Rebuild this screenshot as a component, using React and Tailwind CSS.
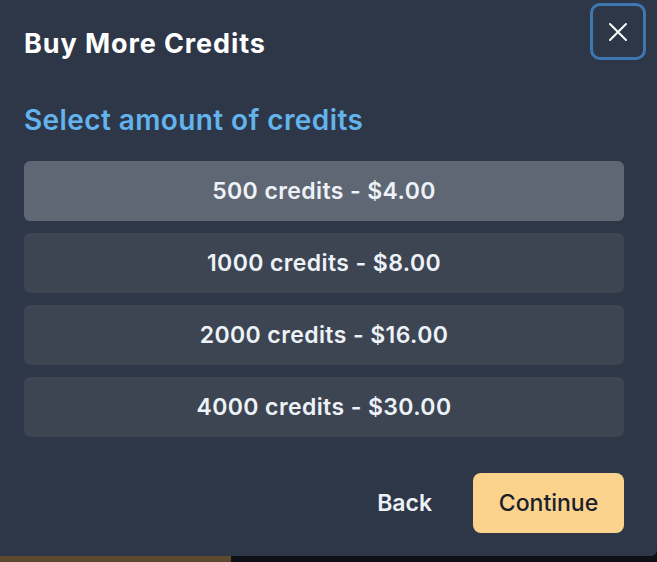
import React from "react";

const options = [
  { label: "500 credits - $4.00", selected: true },
  { label: "1000 credits - $8.00" },
  { label: "2000 credits - $16.00" },
  { label: "4000 credits - $30.00" },
];

export default function App() {
  return (
    <div
      className="w-[657px] h-[562px] bg-[#0f1117] flex flex-col overflow-hidden"
      style={{ fontFamily: "Inter, 'Noto Sans', sans-serif" }}
    >
      <div className="h-[556px] w-[657px] bg-[#2d3748] rounded-br-md flex flex-col">
        <div className="flex items-start justify-between">
          <h2 className="pl-6 pt-[27px] text-[27px] leading-[34px] font-bold text-white tracking-[0.9px]">
            Buy More Credits
          </h2>
          <button className="mt-[3px] mr-[11px] w-[56px] h-[57px] rounded-[10px] border-[3px] border-[#3f78b0] flex items-center justify-center text-white">
            <svg width="20" height="20" viewBox="0 0 20 20" fill="none" stroke="currentColor" strokeWidth="2" strokeLinecap="round">
              <path d="M2 2L18 18M18 2L2 18" />
            </svg>
          </button>
        </div>
        <div className="pl-6 pr-[33px] pt-[41px]">
          <h3 className="text-[28px] leading-[36px] font-semibold text-[#63b3ed] tracking-[0.4px]">
            Select amount of credits
          </h3>
          <div className="mt-[23px] flex flex-col gap-[12px]">
            {options.map((o) => (
              <div
                key={o.label}
                className={
                  "h-[60px] rounded-md flex items-center justify-center text-[23px] font-semibold text-[#edf2f7] tracking-[0.4px] " +
                  (o.selected ? "bg-[#5f6775]" : "bg-[#3d4553]")
                }
              >
                {o.label}
              </div>
            ))}
          </div>
        </div>
        <div className="flex justify-end items-center pr-[33px] pt-[36px] gap-[41px]">
          <span className="text-[23px] font-semibold text-[#edf2f7]">Back</span>
          <button className="w-[151px] h-[60px] rounded-lg bg-[#fbd38d] text-[#1a202c] text-[23px] font-medium">
            Continue
          </button>
        </div>
      </div>
      <div className="flex h-[6px]">
        <div className="w-[231px] bg-[#5c4a2f]" />
        <div className="flex-1 bg-[#0f1117]" />
      </div>
    </div>
  );
}
